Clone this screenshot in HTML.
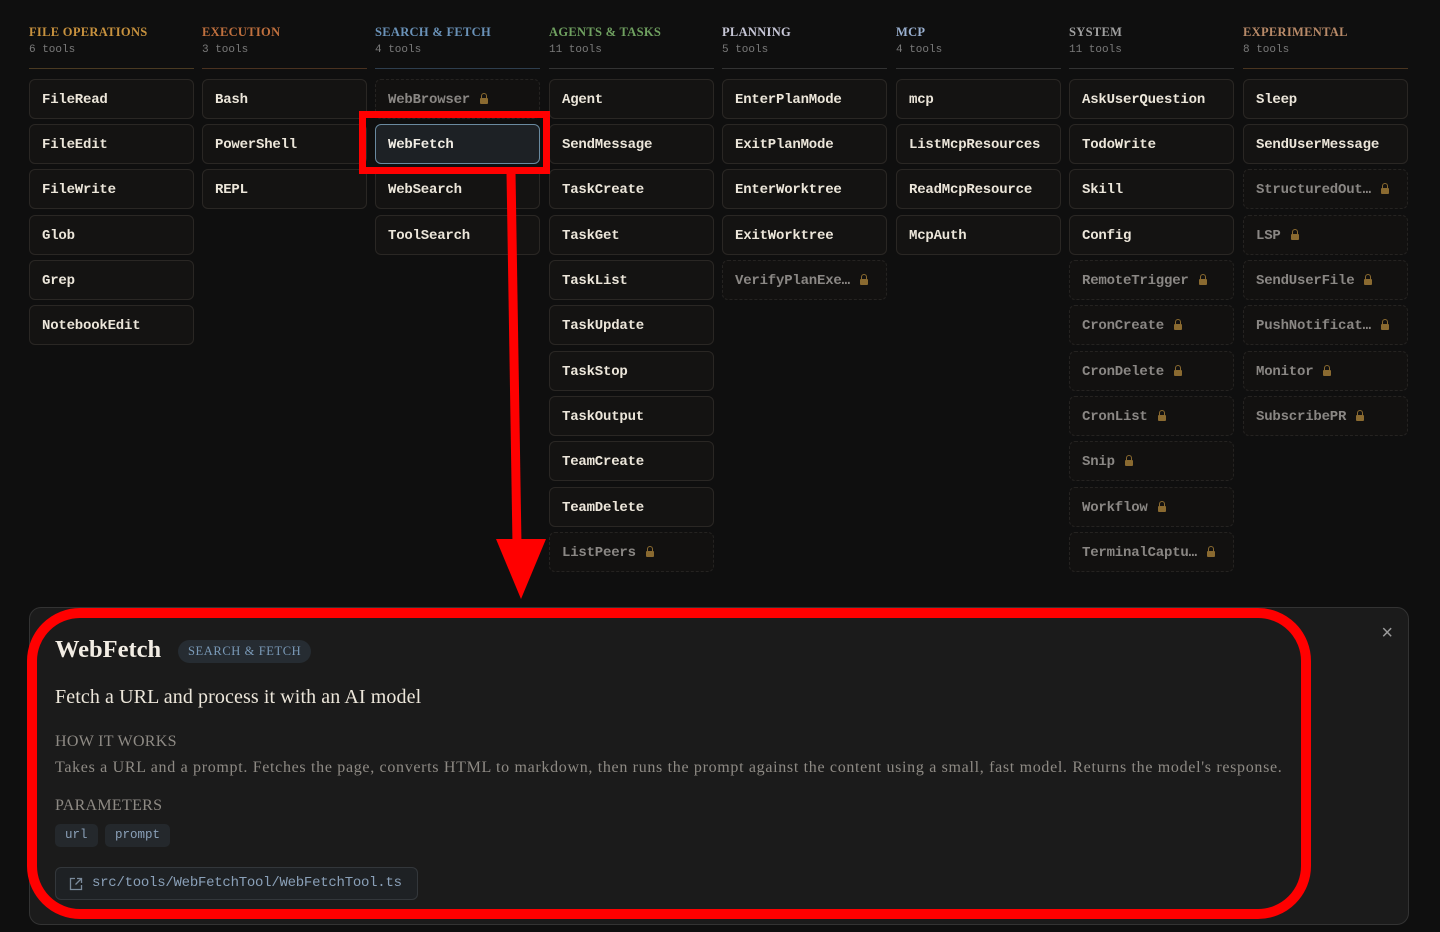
<!DOCTYPE html>
<html><head><meta charset="utf-8"><style>
*{margin:0;padding:0;box-sizing:border-box}
body{width:1440px;height:932px;background:#0f0f0f;position:relative;overflow:hidden;font-family:"Liberation Mono",monospace}
.h{position:absolute;top:25px;width:165px;height:44px;border-bottom:1px solid #4a3a25}
.h b{display:block;font:bold 12.5px "Liberation Serif",serif;letter-spacing:.3px;margin-top:0}
.h span{display:block;font-size:11px;color:#7a7a7a;margin-top:4px}
.c{position:absolute;width:165px;height:40px;border:1px solid #2a2724;border-radius:6px;background:#141312;color:#ece6da;font-weight:bold;font-size:14px;line-height:41px;padding-left:12px;white-space:nowrap;letter-spacing:-.2px}
.c.l{border:1px dashed #252321;background:#121110;color:#8a8784}
.c.l i{display:inline-block;width:8px;height:6px;background:#8a6a30;margin-left:10px;position:relative;vertical-align:-1px;border-radius:1px}
.c.l i:before{content:"";position:absolute;left:1px;top:-5px;width:4px;height:5px;border:1.5px solid #8a6a30;border-bottom:none;border-radius:3px 3px 0 0}
.c.s{background:#1d2125;border-color:#6a8aa0;color:#f0ece4}
.panel{position:absolute;left:29px;top:607px;width:1380px;height:318px;background:#1b1b1b;border:1px solid #333;border-radius:12px}
.serif{font-family:"Liberation Serif",serif}
</style></head><body>

<div class="h" style="left:29px;border-color:#4a3a22"><b style="color:#c8923e">FILE OPERATIONS</b><span>6 tools</span></div>
<div class="h" style="left:202px;border-color:#4a3220"><b style="color:#c0703e">EXECUTION</b><span>3 tools</span></div>
<div class="h" style="left:375px;border-color:#2e3e4e"><b style="color:#6a92b8">SEARCH &amp; FETCH</b><span>4 tools</span></div>
<div class="h" style="left:549px;border-color:#333"><b style="color:#6fa060">AGENTS &amp; TASKS</b><span>11 tools</span></div>
<div class="h" style="left:722px;border-color:#333"><b style="color:#c8c8d8">PLANNING</b><span>5 tools</span></div>
<div class="h" style="left:896px;border-color:#333"><b style="color:#9ab0d0">MCP</b><span>4 tools</span></div>
<div class="h" style="left:1069px;border-color:#333"><b style="color:#a0a0a0">SYSTEM</b><span>11 tools</span></div>
<div class="h" style="left:1243px;border-color:#4a3520"><b style="color:#b88a68">EXPERIMENTAL</b><span>8 tools</span></div>

<div class="c" style="left:29px;top:79px">FileRead</div>
<div class="c" style="left:29px;top:124px">FileEdit</div>
<div class="c" style="left:29px;top:169px">FileWrite</div>
<div class="c" style="left:29px;top:215px">Glob</div>
<div class="c" style="left:29px;top:260px">Grep</div>
<div class="c" style="left:29px;top:305px">NotebookEdit</div>

<div class="c" style="left:202px;top:79px">Bash</div>
<div class="c" style="left:202px;top:124px">PowerShell</div>
<div class="c" style="left:202px;top:169px">REPL</div>

<div class="c l" style="left:375px;top:79px">WebBrowser<i></i></div>
<div class="c s" style="left:375px;top:124px">WebFetch</div>
<div class="c" style="left:375px;top:169px">WebSearch</div>
<div class="c" style="left:375px;top:215px">ToolSearch</div>

<div class="c" style="left:549px;top:79px">Agent</div>
<div class="c" style="left:549px;top:124px">SendMessage</div>
<div class="c" style="left:549px;top:169px">TaskCreate</div>
<div class="c" style="left:549px;top:215px">TaskGet</div>
<div class="c" style="left:549px;top:260px">TaskList</div>
<div class="c" style="left:549px;top:305px">TaskUpdate</div>
<div class="c" style="left:549px;top:351px">TaskStop</div>
<div class="c" style="left:549px;top:396px">TaskOutput</div>
<div class="c" style="left:549px;top:441px">TeamCreate</div>
<div class="c" style="left:549px;top:487px">TeamDelete</div>
<div class="c l" style="left:549px;top:532px">ListPeers<i></i></div>

<div class="c" style="left:722px;top:79px">EnterPlanMode</div>
<div class="c" style="left:722px;top:124px">ExitPlanMode</div>
<div class="c" style="left:722px;top:169px">EnterWorktree</div>
<div class="c" style="left:722px;top:215px">ExitWorktree</div>
<div class="c l" style="left:722px;top:260px">VerifyPlanExe…<i></i></div>

<div class="c" style="left:896px;top:79px">mcp</div>
<div class="c" style="left:896px;top:124px">ListMcpResources</div>
<div class="c" style="left:896px;top:169px">ReadMcpResource</div>
<div class="c" style="left:896px;top:215px">McpAuth</div>

<div class="c" style="left:1069px;top:79px">AskUserQuestion</div>
<div class="c" style="left:1069px;top:124px">TodoWrite</div>
<div class="c" style="left:1069px;top:169px">Skill</div>
<div class="c" style="left:1069px;top:215px">Config</div>
<div class="c l" style="left:1069px;top:260px">RemoteTrigger<i></i></div>
<div class="c l" style="left:1069px;top:305px">CronCreate<i></i></div>
<div class="c l" style="left:1069px;top:351px">CronDelete<i></i></div>
<div class="c l" style="left:1069px;top:396px">CronList<i></i></div>
<div class="c l" style="left:1069px;top:441px">Snip<i></i></div>
<div class="c l" style="left:1069px;top:487px">Workflow<i></i></div>
<div class="c l" style="left:1069px;top:532px">TerminalCaptu…<i></i></div>

<div class="c" style="left:1243px;top:79px">Sleep</div>
<div class="c" style="left:1243px;top:124px">SendUserMessage</div>
<div class="c l" style="left:1243px;top:169px">StructuredOut…<i></i></div>
<div class="c l" style="left:1243px;top:215px">LSP<i></i></div>
<div class="c l" style="left:1243px;top:260px">SendUserFile<i></i></div>
<div class="c l" style="left:1243px;top:305px">PushNotificat…<i></i></div>
<div class="c l" style="left:1243px;top:351px">Monitor<i></i></div>
<div class="c l" style="left:1243px;top:396px">SubscribePR<i></i></div>

<div class="panel">
  <div class="serif" style="position:absolute;left:25px;top:28px;font-size:24.5px;font-weight:bold;color:#f2ede4">WebFetch</div>
  <div class="serif" style="position:absolute;left:148px;top:32px;height:23px;padding:0 10px;border-radius:12px;background:#262c32;color:#7a9ab8;font-size:12.5px;line-height:23px;letter-spacing:.6px">SEARCH &amp; FETCH</div>
  <div class="serif" style="position:absolute;left:25px;top:78px;font-size:20px;color:#ece6da;letter-spacing:.1px">Fetch a URL and process it with an AI model</div>
  <div class="serif" style="position:absolute;left:25px;top:125px;font-size:16px;color:#8e8a84;letter-spacing:.3px">HOW IT WORKS</div>
  <div class="serif" style="position:absolute;left:25px;top:151px;font-size:16px;color:#8e8a84;white-space:nowrap;letter-spacing:.68px">Takes a URL and a prompt. Fetches the page, converts HTML to markdown, then runs the prompt against the content using a small, fast model. Returns the model's response.</div>
  <div class="serif" style="position:absolute;left:25px;top:189px;font-size:16px;color:#8e8a84;letter-spacing:.3px">PARAMETERS</div>
  <div style="position:absolute;left:25px;top:216px;height:23px;padding:0 10px;border-radius:5px;background:#24282c;color:#8aa0b8;font-size:12.5px;line-height:23px">url</div>
  <div style="position:absolute;left:75px;top:216px;height:23px;padding:0 10px;border-radius:5px;background:#24282c;color:#8aa0b8;font-size:12.5px;line-height:23px">prompt</div>
  <div style="position:absolute;left:25px;top:259px;width:363px;height:33px;border:1px solid #33373b;border-radius:6px;background:#1e2124;color:#8aa0b8;font-size:14px;line-height:31px;padding-left:36px;letter-spacing:-.25px">src/tools/WebFetchTool/WebFetchTool.ts
    <svg style="position:absolute;left:13px;top:9px" width="14" height="14" viewBox="0 0 14 14" fill="none" stroke="#7a8a9a" stroke-width="1.3"><path d="M6 1.5H1.5v11h11V8"/><path d="M8 1.5h4.5V6M12.5 1.5L6.5 7.5"/></svg>
  </div>
  <div style="position:absolute;right:15px;top:14px;color:#9a9a9a;font:20px 'Liberation Sans',sans-serif">×</div>
</div>

<svg style="position:absolute;left:0;top:0" width="1440" height="932">
  <rect x="362.5" y="114.5" width="184" height="56" fill="none" stroke="#ff0000" stroke-width="7"/>
  <path d="M511 172 L517 545" stroke="#ff0000" stroke-width="9" fill="none"/>
  <path d="M496 539 L546 539 L521 599 Z" fill="#ff0000"/>
  <rect x="32" y="613" width="1274" height="301" rx="48" fill="none" stroke="#ff0000" stroke-width="10"/>
</svg>
</body></html>
